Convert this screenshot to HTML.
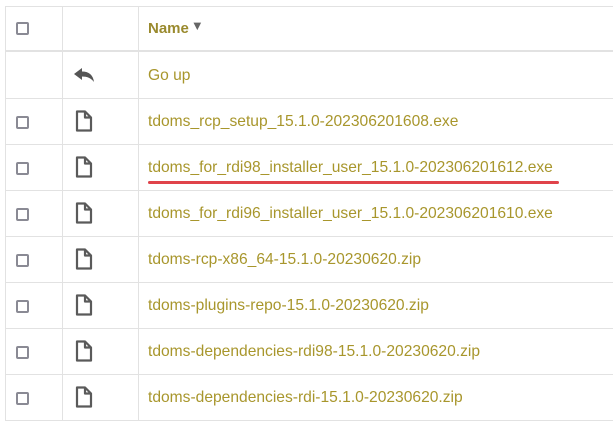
<!DOCTYPE html>
<html><head><style>
body{margin:0;background:#fff;width:613px;height:433px;overflow:hidden;font-family:"Liberation Sans",sans-serif;}
.t{position:absolute;left:5px;top:6px;width:620px;border-top:1px solid #e2e2e2;}
.r{position:absolute;left:5px;width:620px;height:46px;border-bottom:1px solid #e2e2e2;}
.v{position:absolute;top:6px;height:414px;width:1px;background:#e2e2e2;}
.cb{position:absolute;left:11px;top:18px;width:9px;height:9px;border:2px solid #8a8a94;border-radius:2px;}
.tx{position:absolute;left:143px;top:15px;font-size:15.6px;color:#a8962c;white-space:nowrap;}
.ic{position:absolute;left:70px;top:12px;}
</style></head><body>
<div class="t"></div>
<div class="v" style="left:5px"></div>
<div class="v" style="left:62px"></div>
<div class="v" style="left:138px"></div>
<div class="r" style="top:6px;height:44px;border-bottom:2px solid #e2e2e2">
 <div class="cb" style="top:16px"></div>
 <div class="tx" style="top:14px;font-weight:bold;color:#9a8a2e;font-size:15px">Name<span style="font-size:13px;color:#666;position:relative;top:-3px;margin-left:2px">&#9660;</span></div>
</div>
<div class="r" style="top:52px">
 <svg class="ic" style="left:68px;top:15px" width="22" height="16" viewBox="0 0 22 16"><path d="M1 7 L9 1 L9 4.5 C16 4.5 20 8 21 15 C18 11 14 9.5 9 9.5 L9 13 Z" fill="#555"/></svg>
 <div class="tx">Go up</div>
</div>
<div class="r" style="top:98px"><div class="cb"></div>
 <svg class="ic" width="18" height="22" viewBox="0 0 18 22"><path d="M2 1.5 H10 L16 7.5 V20.5 H2 Z M10 1.5 V7.5 H16" fill="none" stroke="#5a5a5a" stroke-width="2.2" stroke-linejoin="round"/></svg>
 <div class="tx">tdoms_rcp_setup_15.1.0-202306201608.exe</div></div>
<div class="r" style="top:144px"><div class="cb"></div>
 <svg class="ic" width="18" height="22" viewBox="0 0 18 22"><path d="M2 1.5 H10 L16 7.5 V20.5 H2 Z M10 1.5 V7.5 H16" fill="none" stroke="#5a5a5a" stroke-width="2.2" stroke-linejoin="round"/></svg>
 <div class="tx">tdoms_for_rdi98_installer_user_15.1.0-202306201612.exe</div>
 <div style="position:absolute;left:143px;top:37px;width:411px;height:3px;background:#e0434a;border-radius:2px"></div></div>
<div class="r" style="top:190px"><div class="cb"></div>
 <svg class="ic" width="18" height="22" viewBox="0 0 18 22"><path d="M2 1.5 H10 L16 7.5 V20.5 H2 Z M10 1.5 V7.5 H16" fill="none" stroke="#5a5a5a" stroke-width="2.2" stroke-linejoin="round"/></svg>
 <div class="tx">tdoms_for_rdi96_installer_user_15.1.0-202306201610.exe</div></div>
<div class="r" style="top:236px"><div class="cb"></div>
 <svg class="ic" width="18" height="22" viewBox="0 0 18 22"><path d="M2 1.5 H10 L16 7.5 V20.5 H2 Z M10 1.5 V7.5 H16" fill="none" stroke="#5a5a5a" stroke-width="2.2" stroke-linejoin="round"/></svg>
 <div class="tx">tdoms-rcp-x86_64-15.1.0-20230620.zip</div></div>
<div class="r" style="top:282px"><div class="cb"></div>
 <svg class="ic" width="18" height="22" viewBox="0 0 18 22"><path d="M2 1.5 H10 L16 7.5 V20.5 H2 Z M10 1.5 V7.5 H16" fill="none" stroke="#5a5a5a" stroke-width="2.2" stroke-linejoin="round"/></svg>
 <div class="tx">tdoms-plugins-repo-15.1.0-20230620.zip</div></div>
<div class="r" style="top:328px"><div class="cb"></div>
 <svg class="ic" width="18" height="22" viewBox="0 0 18 22"><path d="M2 1.5 H10 L16 7.5 V20.5 H2 Z M10 1.5 V7.5 H16" fill="none" stroke="#5a5a5a" stroke-width="2.2" stroke-linejoin="round"/></svg>
 <div class="tx">tdoms-dependencies-rdi98-15.1.0-20230620.zip</div></div>
<div class="r" style="top:374px"><div class="cb"></div>
 <svg class="ic" width="18" height="22" viewBox="0 0 18 22"><path d="M2 1.5 H10 L16 7.5 V20.5 H2 Z M10 1.5 V7.5 H16" fill="none" stroke="#5a5a5a" stroke-width="2.2" stroke-linejoin="round"/></svg>
 <div class="tx">tdoms-dependencies-rdi-15.1.0-20230620.zip</div></div>
</body></html>
